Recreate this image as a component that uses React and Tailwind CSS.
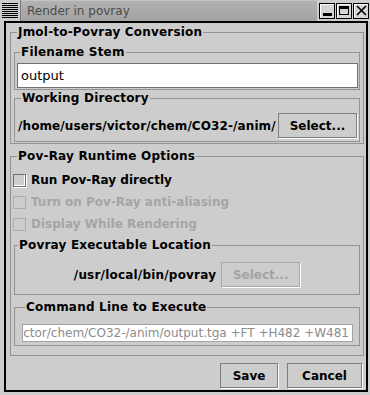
import React from "react";

const F = "font-['DejaVu_Sans',sans-serif]";

function Group({ title, className = "", children }) {
  return (
    <fieldset className={`border border-[#939393] min-w-0 ${className}`}>
      <legend className="ml-[3px] px-[1px] text-[12px] leading-[14px] font-bold text-black tracking-[0.2px]">
        {title}
      </legend>
      {children}
    </fieldset>
  );
}

function Btn({ children, w, disabled }) {
  return (
    <div
      className={`${w} h-[25px] flex items-center justify-center border text-[12px] font-bold shadow-[1px_1px_0_#ffffff] ${
        disabled ? "border-[#a9a9a9] text-[#a3a3a3]" : "border-[#7d7d7d] text-black"
      }`}
    >
      {children}
    </div>
  );
}

function Check({ label, disabled }) {
  return (
    <div className="h-[22px] flex items-center pl-[1px]">
      <div
        className={`w-[13px] h-[13px] border ${
          disabled ? "border-[#adadad]" : "border-[#6f6f6f] shadow-[inset_-1px_-1px_0_#ffffff,1px_1px_0_#ffffff]"
        }`}
      />
      <span className={`ml-[5px] text-[12px] font-bold ${disabled ? "text-[#a5a5a5]" : "text-black"}`}>
        {label}
      </span>
    </div>
  );
}

function TitleButton({ children }) {
  return (
    <div className="w-[16px] h-[16px] border border-black bg-[#d4d4d4] shadow-[inset_1px_1px_0_#ffffff] flex items-center justify-center">
      {children}
    </div>
  );
}

export default function App() {
  return (
    <div className={`w-[370px] h-[395px] bg-[#cdcdcd] flex flex-col overflow-hidden ${F}`}>
      {/* title bar */}
      <div className="h-[21px] flex items-stretch bg-[#cdcdcd]">
        <div className="w-[21px] flex items-center justify-center border-r border-[#7a7a7a]">
          <svg width="16" height="16" viewBox="0 0 16 16">
            {[1, 3, 5, 7, 9, 11, 13, 15].map((y) => (
              <rect key={y} x="0" y={y - 1} width="16" height="1" fill="#000" />
            ))}
          </svg>
        </div>
        <div className="flex-1 bg-gradient-to-b from-[#b2b2b2] to-[#a2a2a2] flex items-center pl-[6px] border-t border-[#c4c4c4]">
          <span className="text-[12px] text-[#4b4b4b]">Render in povray</span>
        </div>
        <div className="flex items-center gap-[1px] pl-[2px] pr-[1px] bg-[#cdcdcd]">
          <TitleButton>
            <div className="w-[9px] h-[3px] bg-black mt-[7px]" />
          </TitleButton>
          <TitleButton>
            <div className="w-[10px] h-[9px] border border-black border-t-[3px]" />
          </TitleButton>
          <TitleButton>
            <svg width="11" height="11" viewBox="0 0 11 11">
              <path d="M1 1 L10 10 M10 1 L1 10" stroke="#000" strokeWidth="1.6" />
            </svg>
          </TitleButton>
        </div>
      </div>

      {/* window body */}
      <div className="flex-1 ml-[4px] mr-[2px] mb-[3px] border-2 border-black flex flex-col pl-[4px] pr-[2px]">
        <Group title="Jmol-to-Povray Conversion" className="mt-[2px] px-[3px] pb-[1px]">
          <Group title="Filename Stem" className="mt-[6px] pl-[2px] pr-[1px] pt-[4px] pb-[1px]">
            <div className="h-[25px] bg-white border border-[#707070] flex items-center pl-[3px] text-[13px] text-black">
              output
            </div>
          </Group>
          <Group title="Working Directory" className="mt-[1px] pl-[3px] pr-[2px] pt-[8px] pb-[3px]">
            <div className="flex items-center justify-between">
              <span className="text-[12px] font-bold text-black tracking-[0.1px]">
                /home/users/victor/chem/CO32-/anim/
              </span>
              <Btn w="w-[79px]">Select...</Btn>
            </div>
          </Group>
        </Group>

        <Group title="Pov-Ray Runtime Options" className="mt-[5px] px-[3px] pb-[9px]">
          <div className="pt-[6px] -mx-[2px]">
            <Check label="Run Pov-Ray directly" />
            <Check label="Turn on Pov-Ray anti-aliasing" disabled />
            <Check label="Display While Rendering" disabled />
          </div>
          <Group title="Povray Executable Location" className="mt-[3px] pt-[10px] pb-[7px]">
            <div className="flex items-center justify-center gap-[5px]">
              <span className="text-[12px] font-bold text-black tracking-[0.2px]">/usr/local/bin/povray</span>
              <Btn w="w-[79px]" disabled>
                Select...
              </Btn>
            </div>
          </Group>
          <Group title="Command Line to Execute" className="mt-[5px] pl-[7px] pr-[6px] pt-[10px] pb-[3px]">
            <div className="h-[18px] bg-white border border-[#a2a2a2] overflow-hidden flex items-center justify-end pr-[3px]">
              <span className="whitespace-nowrap text-[12px] text-[#8c8c8c]">
                ctor/chem/CO32-/anim/output.tga +FT +H482 +W481
              </span>
            </div>
          </Group>
        </Group>

        <div className="mt-[7px] flex justify-end gap-[9px] pr-[2px]">
          <Btn w="w-[58px]">Save</Btn>
          <Btn w="w-[75px]">Cancel</Btn>
        </div>
      </div>
    </div>
  );
}
